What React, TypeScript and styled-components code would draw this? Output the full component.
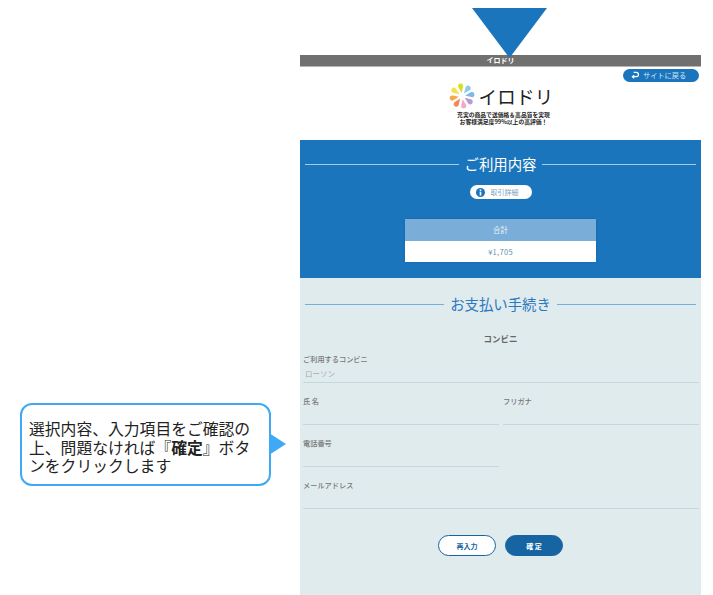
import React from "react";
import styled, { createGlobalStyle } from "styled-components";

const GlobalStyle = createGlobalStyle`
  html, body {
    margin: 0;
    padding: 0;
    background: #fff;
  }
  body {
    font-family: "Noto Sans CJK JP", "Noto Sans", sans-serif;
    color: #666;
  }
`;

const petals = [
  { angle: -8, color: "#d9e021" },
  { angle: 38, color: "#8cc8f0" },
  { angle: 82, color: "#7fb8e6" },
  { angle: 125, color: "#b79ad0" },
  { angle: 170, color: "#f2a9c9" },
  { angle: 215, color: "#ef8a5a" },
  { angle: 258, color: "#f5a94c" },
  { angle: 305, color: "#f7e04a" },
];

const App: React.FC = () => {
  return (
    <>
      <GlobalStyle />
      <Page>
        <Marker width="76" height="50" viewBox="0 0 76 50">
          <polygon points="0,0 75,0 37.5,50" fill="#1b75bc" />
        </Marker>

        <NoteColumn>
          <Note>
            選択内容、入力項目をご確認の上、問題なければ『<strong>確定</strong>』ボタンをクリックします
          </Note>
        </NoteColumn>

        <Panel>
          <TitleBar>イロドリ</TitleBar>

          <ShopHeader>
            <BackRow>
              <BackButton>
                <svg width="8" height="9" viewBox="0 0 9 10" fill="none" stroke="#fff" strokeWidth="1.4">
                  <path d="M3 1.5h3a2.4 2.4 0 0 1 0 4.8H2" />
                  <path d="M3.6 4.6L1.6 6.3l2 1.8" />
                </svg>
                <span>サイトに戻る</span>
              </BackButton>
            </BackRow>
            <Logo>
              <svg width="26" height="26" viewBox="-13 -13 26 26">
                {petals.map((petal) => (
                  <path
                    key={petal.angle}
                    d="M0-12.5c2.1 0 3 1.6 2.4 3.4L0-3.2l-2.4-5.9c-.6-1.8.3-3.4 2.4-3.4z"
                    fill={petal.color}
                    transform={`rotate(${petal.angle})`}
                  />
                ))}
              </svg>
              <LogoName>イロドリ</LogoName>
            </Logo>
            <Tagline>
              充実の商品で送価格＆高品質を実現
              <br />
              お客様満足度99%以上の高評価！
            </Tagline>
          </ShopHeader>

          <UsageSection>
            <SectionTitle $tone="light">ご利用内容</SectionTitle>
            <DetailButton>
              <svg width="9" height="9" viewBox="0 0 10 10">
                <circle cx="5" cy="5" r="5" fill="#1b75bc" />
                <rect x="4.1" y="1.6" width="1.8" height="1.7" fill="#fff" />
                <rect x="4.1" y="4.1" width="1.8" height="4.2" fill="#fff" />
              </svg>
              <span>取引詳細</span>
            </DetailButton>
            <TotalTable>
              <TotalHead>合計</TotalHead>
              <TotalValue>¥1,705</TotalValue>
            </TotalTable>
          </UsageSection>

          <PaymentSection>
            <SectionTitle $tone="dark">お支払い手続き</SectionTitle>
            <MethodName>コンビニ</MethodName>
            <FormGrid>
              <Field $wide>
                <FieldLabel>ご利用するコンビニ</FieldLabel>
                <FieldValue>ローソン</FieldValue>
              </Field>
              <Field>
                <FieldLabel>氏 名</FieldLabel>
                <FieldValue />
              </Field>
              <Field>
                <FieldLabel>フリガナ</FieldLabel>
                <FieldValue />
              </Field>
              <Field>
                <FieldLabel>電話番号</FieldLabel>
                <FieldValue />
              </Field>
              <Field $wide>
                <FieldLabel>メールアドレス</FieldLabel>
                <FieldValue />
              </Field>
            </FormGrid>
            <Actions>
              <ActionButton>再入力</ActionButton>
              <ActionButton $primary>確 定</ActionButton>
            </Actions>
          </PaymentSection>
        </Panel>
      </Page>
    </>
  );
};

const Page = styled.div`
  position: relative;
  display: flex;
  width: 713px;
  height: 595px;
  overflow: hidden;
`;

const Marker = styled.svg`
  position: absolute;
  top: 8px;
  left: 472px;
  z-index: 2;
`;

const NoteColumn = styled.div`
  width: 300px;
  flex: none;
  box-sizing: border-box;
  padding: 403px 0 0 20px;
`;

const Note = styled.div`
  position: relative;
  box-sizing: border-box;
  width: 251px;
  height: 83px;
  padding: 15px 12px 0 7px;
  background: #fff;
  border: 2px solid #3fa9f5;
  border-radius: 12px;
  color: #222;
  font-size: 15.8px;
  line-height: 18.6px;

  strong {
    font-weight: 700;
  }

  &::after {
    content: "";
    position: absolute;
    top: 28px;
    left: 247px;
    border-style: solid;
    border-width: 11.5px 0 11.5px 17px;
    border-color: transparent transparent transparent #3fa9f5;
  }
`;

const Panel = styled.main`
  width: 401px;
  flex: none;
  margin-top: 55px;
  display: flex;
  flex-direction: column;
`;

const TitleBar = styled.div`
  height: 11px;
  background: #707070;
  border-bottom: 1px solid #b5b5b5;
  color: #fff;
  font-size: 7px;
  font-weight: 700;
  line-height: 11px;
  text-align: center;
`;

const ShopHeader = styled.header`
  height: 73px;
  flex: none;
  display: flex;
  flex-direction: column;
  align-items: center;
  background: #fff;
`;

const BackRow = styled.div`
  align-self: stretch;
  display: flex;
  justify-content: flex-end;
  padding: 2px 2px 0 0;
`;

const BackButton = styled.button`
  width: 76px;
  height: 13px;
  box-sizing: border-box;
  padding: 0 0 0 8px;
  display: flex;
  align-items: center;
  gap: 4px;
  border: 0;
  border-radius: 7px;
  background: #1b75bc;
  color: #d5e6f4;
  font-family: inherit;
  font-size: 7.2px;
  line-height: 13px;
`;

const Logo = styled.div`
  display: flex;
  align-items: center;
  gap: 4px;
  height: 26px;
  margin: 1px 0 0 1px;
`;

const LogoName = styled.span`
  color: #222;
  font-size: 18.5px;
  font-weight: 400;
  letter-spacing: 0.2px;
  line-height: 26px;
`;

const Tagline = styled.div`
  margin: 2px 0 0 6px;
  color: #222;
  font-size: 5.8px;
  font-weight: 700;
  line-height: 7px;
  text-align: center;
`;

const UsageSection = styled.section`
  height: 138px;
  flex: none;
  box-sizing: border-box;
  padding-top: 12px;
  display: flex;
  flex-direction: column;
  align-items: center;
  background: #1b75bc;
`;

const SectionTitle = styled.h2<{ $tone: "light" | "dark" }>`
  align-self: stretch;
  margin: 0;
  padding: 0 5px;
  height: 23px;
  display: flex;
  align-items: center;
  gap: 6px;
  color: ${(props) => (props.$tone === "light" ? "#fff" : "#2a78bd")};
  font-size: 14.4px;
  font-weight: 400;
  line-height: 22px;

  &::before,
  &::after {
    content: "";
    flex: 1;
    height: 1px;
    margin-top: 2px;
    background: ${(props) => (props.$tone === "light" ? "#a6cbe6" : "#74b0de")};
  }
`;

const DetailButton = styled.button`
  width: 62px;
  height: 14px;
  margin-top: 10px;
  box-sizing: border-box;
  padding: 0 0 0 6px;
  display: flex;
  align-items: center;
  gap: 6px;
  border: 0;
  border-radius: 7px;
  background: #fff;
  color: #7f9fc0;
  font-family: inherit;
  font-size: 7px;
  line-height: 14px;
`;

const TotalTable = styled.div`
  width: 191px;
  margin-top: 20px;
  box-shadow: 0 0 2px rgba(20, 70, 120, 0.35);
`;

const TotalHead = styled.div`
  height: 22px;
  background: #7aadd8;
  color: #f0f6fb;
  font-size: 7.5px;
  line-height: 21px;
  text-align: center;
`;

const TotalValue = styled.div`
  height: 21px;
  background: #fff;
  color: #5f94b0;
  font-size: 7.5px;
  letter-spacing: 0.3px;
  line-height: 21px;
  text-align: center;
`;

const PaymentSection = styled.section`
  flex: 1;
  box-sizing: border-box;
  padding-top: 14px;
  display: flex;
  flex-direction: column;
  background: #e0ebee;
`;

const MethodName = styled.div`
  margin-top: 17px;
  color: #666;
  font-size: 8.5px;
  font-weight: 700;
  line-height: 13px;
  text-align: center;
`;

const FormGrid = styled.div`
  margin-top: 9px;
  padding: 0 3px;
  display: grid;
  grid-template-columns: 196px 196px;
  column-gap: 4px;
  row-gap: 13px;
`;

const Field = styled.div<{ $wide?: boolean }>`
  ${(props) => props.$wide && "grid-column: 1 / -1;"}
  box-sizing: border-box;
  display: flex;
  flex-direction: column;
  height: 29px;
  border-bottom: 1px solid #c4d7dd;
`;

const FieldLabel = styled.label`
  color: #777;
  font-size: 7.2px;
  font-weight: 500;
  line-height: 11px;
`;

const FieldValue = styled.div`
  padding-left: 2px;
  margin-top: 3px;
  min-height: 11px;
  color: #aaa;
  font-size: 7.5px;
  line-height: 11px;
`;

const Actions = styled.div`
  margin-top: 26px;
  display: flex;
  justify-content: center;
  gap: 9px;
`;

const ActionButton = styled.button<{ $primary?: boolean }>`
  width: 58px;
  height: 21px;
  box-sizing: border-box;
  padding: 0;
  border: 1.5px solid #1764a3;
  border-radius: 11px;
  background: ${(props) => (props.$primary ? "#1764a3" : "#fff")};
  color: ${(props) => (props.$primary ? "#fff" : "#1764a3")};
  font-family: inherit;
  font-size: 7px;
  font-weight: 700;
  line-height: 18px;
`;

export default App;
